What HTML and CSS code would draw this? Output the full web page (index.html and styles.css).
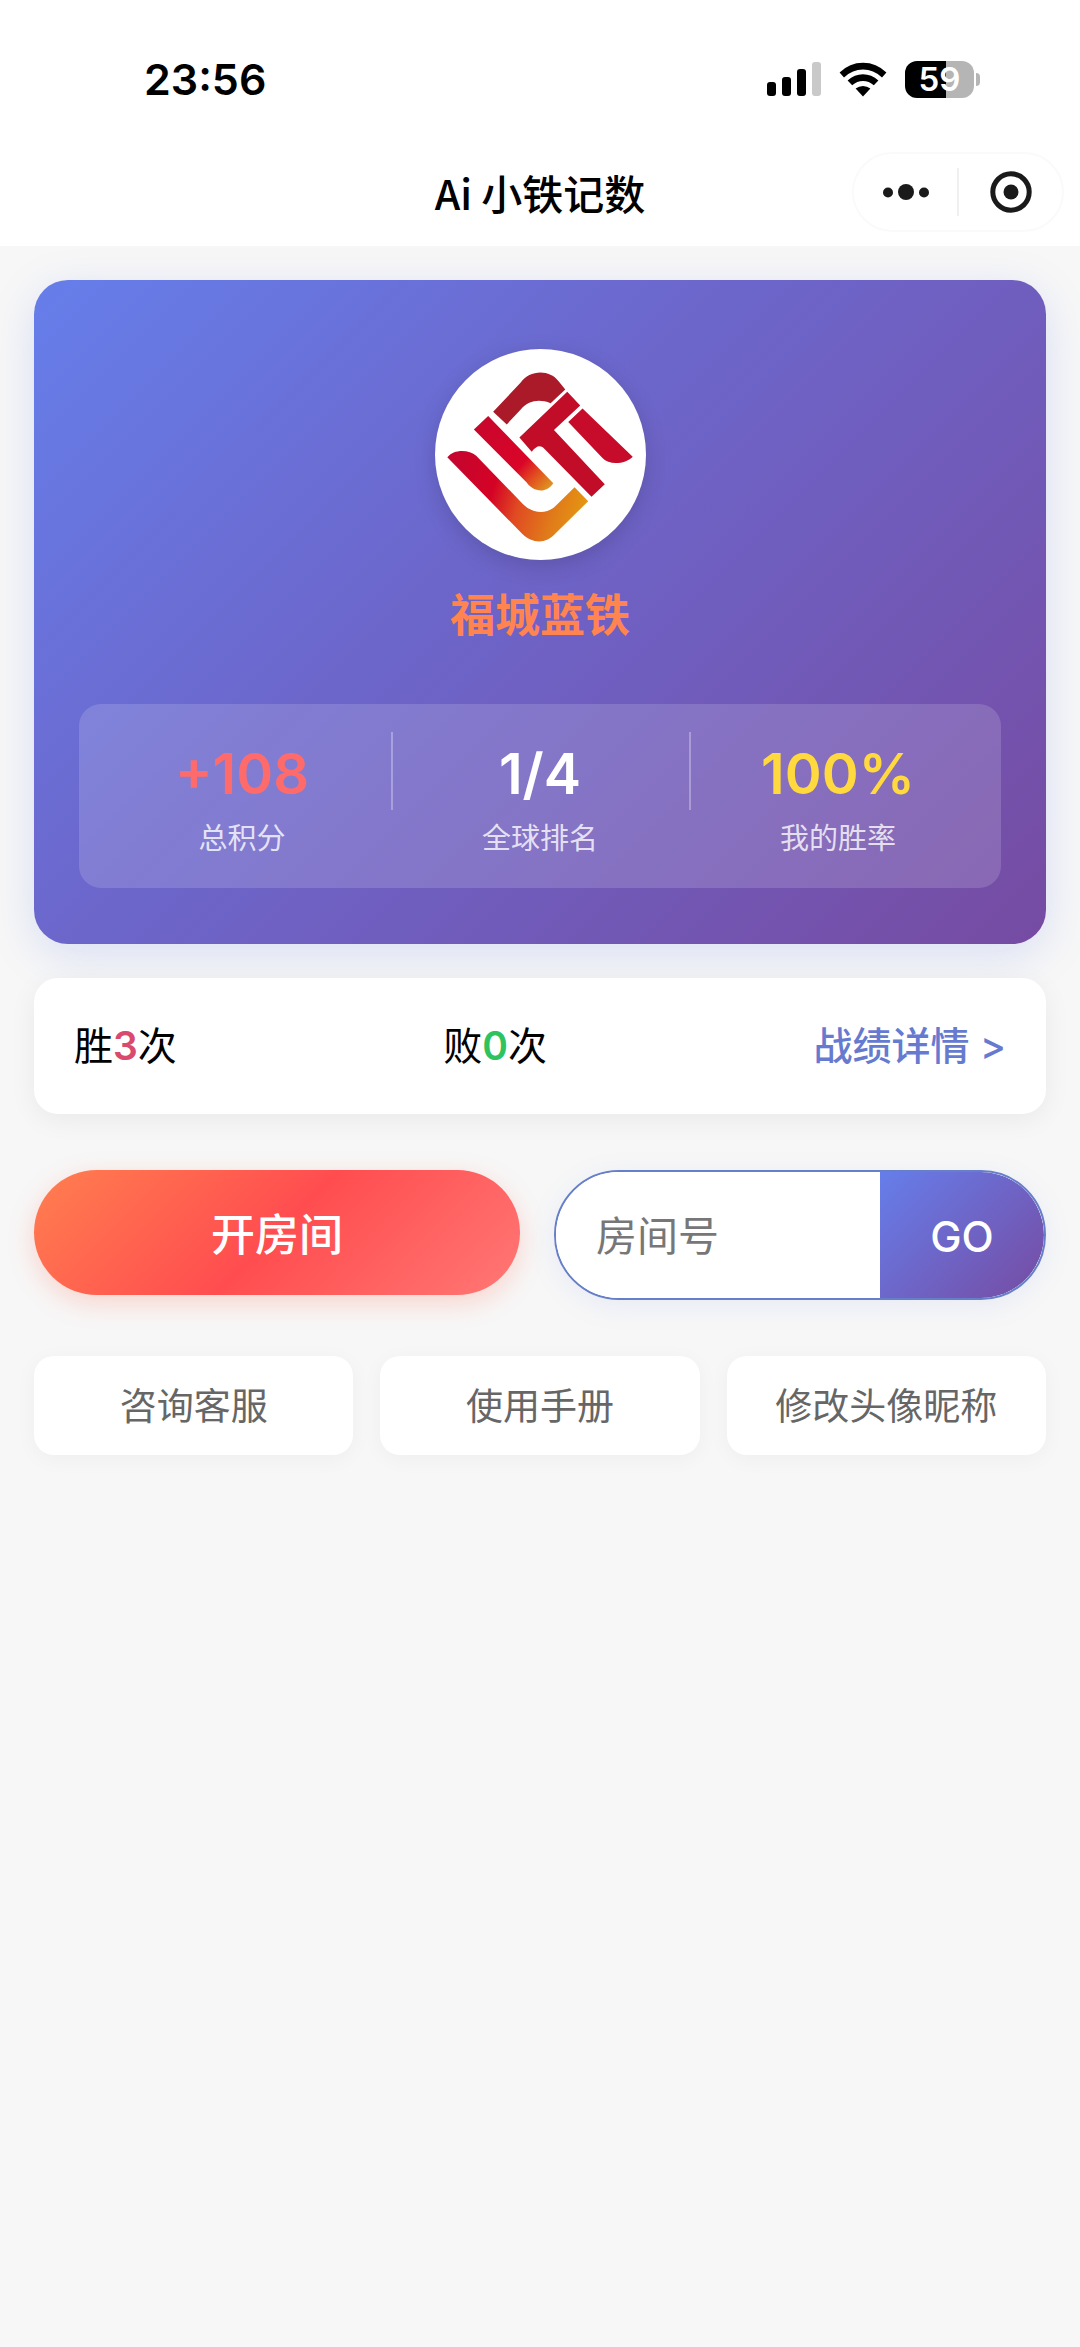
FILE: index.html
```html
<!DOCTYPE html>
<html lang="zh-CN">
<head>
<meta charset="utf-8">
<meta name="viewport" content="width=device-width, initial-scale=1">
<title>Ai 小铁记数</title>
<link rel="stylesheet" href="styles.css">
</head>
<body>
<header class="top">
  <div class="status">
    <time class="clock">23:56</time>
    <div class="status-icons">
      <svg class="signal" width="54" height="34" viewBox="0 0 54 34" aria-hidden="true">
        <rect x="0" y="20" width="9" height="14" rx="3"/>
        <rect x="15" y="15" width="9" height="19" rx="3"/>
        <rect x="30" y="7" width="9" height="27" rx="3"/>
        <rect x="45" y="0" width="9" height="34" rx="3" fill="#c9c9c9"/>
      </svg>
      <svg class="wifi" width="48" height="35" viewBox="0 0 48 35" aria-hidden="true">
        <path d="M0.6 10.6 Q10.500 0.800 24 0.800 T47.400 10.600 L43 15.400 Q34.500 7.500 24 7.500 T5 15.400 Z"/>
        <path d="M8.600 18.600 Q15.500 12.200 24 12.200 T39.400 18.600 L34.800 23.200 Q30 18.900 24 18.900 T13.200 23.200 Z"/>
        <path d="M16.600 26.600 Q20 24 24 24 T31.400 26.600 L24 34.500 Z"/>
      </svg>
      <div class="battery"><span>59</span></div>
    </div>
  </div>
  <div class="navbar">
    <h1 class="title">Ai 小铁记数</h1>
    <div class="capsule">
      <button class="capsule-btn" type="button" aria-label="更多">
        <svg width="46" height="16" viewBox="0 0 46 16" fill="#1a1a1a"><circle cx="5" cy="8.500" r="5"/><circle cx="23" cy="8" r="8"/><circle cx="41" cy="8.500" r="5"/></svg>
      </button>
      <button class="capsule-btn" type="button" aria-label="关闭">
        <svg width="42" height="42" viewBox="0 0 42 42"><circle cx="21" cy="21" r="18.200" fill="none" stroke="#1a1a1a" stroke-width="5"/><circle cx="21" cy="21" r="7.500" fill="#1a1a1a"/></svg>
      </button>
    </div>
  </div>
</header>

<main class="content">
  <section class="profile">
    <svg class="avatar" viewBox="42 26 635 635" role="img" aria-label="头像">
      <defs>
        <linearGradient id="stem" gradientUnits="userSpaceOnUse" x1="180" y1="250" x2="385" y2="440">
          <stop offset="0" stop-color="#c9062c"/><stop offset=".62" stop-color="#da0528"/><stop offset=".82" stop-color="#e2511f"/><stop offset="1" stop-color="#de9020"/>
        </linearGradient>
        <linearGradient id="bowl" gradientUnits="userSpaceOnUse" x1="90" y1="350" x2="500" y2="480">
          <stop offset="0" stop-color="#c5052f"/><stop offset=".35" stop-color="#d40325"/><stop offset=".55" stop-color="#e04a22"/><stop offset=".8" stop-color="#e07a1a"/><stop offset="1" stop-color="#e59512"/>
        </linearGradient>
      </defs>
      <path fill="#ab1a28" d="M217 215 L300 127 C325 90 385 85 414 123 L434 148 L390 189 C355 176 325 180 300 208 L258 253 Z"/>
      <path fill="url(#stem)" d="M202 228 L159 268 L318 428 C335 453 375 465 398 430 Z"/>
      <path fill="#c20d28" d="M440 155 L479 196 L400 270 L553 433 L513 471 L371 326 C358 313 347 318 333 335 L296 292 Z"/>
      <path fill="#c60c2a" d="M486 205 L637 350 C615 373 566 377 546 354 L443 246 Z"/>
      <path fill="url(#bowl)" d="M79 352 C98 326 145 328 166 347 L307 493 C338 523 382 525 410 493 L462 442 L503 484 L406 580 C374 616 335 611 305 583 Z"/>
    </svg>
    <h2 class="name">福城蓝铁</h2>
    <dl class="stats">
      <div class="stat"><dt>总积分</dt><dd class="score">+108</dd></div>
      <div class="stat"><dt>全球排名</dt><dd>1/4</dd></div>
      <div class="stat"><dt>我的胜率</dt><dd class="rate">100%</dd></div>
    </dl>
  </section>

  <section class="record">
    <span>胜<b class="win">3</b>次</span>
    <span>败<b class="loss">0</b>次</span>
    <a class="details" href="#details">战绩详情 &gt;</a>
  </section>

  <section class="actions">
    <button class="create" type="button">开房间</button>
    <form class="join">
      <input class="room" type="text" placeholder="房间号" aria-label="房间号">
      <button class="go" type="button">GO</button>
    </form>
  </section>

  <nav class="links">
    <button class="link" type="button">咨询客服</button>
    <button class="link" type="button">使用手册</button>
    <button class="link" type="button">修改头像昵称</button>
  </nav>
</main>
</body>
</html>
```
FILE: styles.css
```css
* {
  box-sizing: border-box;
}

body {
  margin: 0;
  min-height: 100vh;
  background: #f7f7f7;
  color: #000;
  font-family: Inter, "Noto Sans CJK SC", sans-serif;
}

button,
input {
  font: inherit;
  border: 0;
  padding: 0;
  margin: 0;
}

.top {
  background: #fff;
  padding-bottom: 14px;
}

.status {
  display: flex;
  justify-content: space-between;
  align-items: center;
  height: 152px;
  padding: 6px 99px 0 144px;
}

.clock {
  font-size: 43px;
  font-weight: 600;
  line-height: 52px;
}

.status-icons {
  display: flex;
  align-items: center;
  gap: 18px;
}

.battery {
  position: relative;
  width: 69px;
  height: 37px;
  margin-right: 7px;
  border-radius: 12px;
  background: linear-gradient(90deg, #000 59%, #b5b5b5 59%);
  color: #fff;
  font-size: 33px;
  font-weight: 600;
  line-height: 37px;
  text-align: center;
}

.battery::after {
  content: "";
  position: absolute;
  left: 71px;
  top: 12px;
  width: 4px;
  height: 13px;
  border-radius: 0 6px 6px 0;
  background: #b5b5b5;
}

.navbar {
  display: grid;
  grid-template-columns: 1fr auto 1fr;
  align-items: center;
  height: 80px;
  padding: 0 16px;
}

.title {
  grid-column: 2;
  margin: 0;
  font-size: 41px;
  font-weight: 500;
  line-height: 56px;
  font-family: "Noto Sans CJK SC", sans-serif;
}

.capsule {
  display: flex;
  justify-self: end;
  align-items: center;
  width: 212px;
  height: 80px;
  border: 2px solid #fafafa;
  border-radius: 40px;
}

.capsule-btn {
  display: flex;
  flex: 1;
  align-items: center;
  justify-content: center;
  height: 48px;
  background: none;
}

.capsule-btn + .capsule-btn {
  border-left: 2px solid #f0f0f0;
}

.content {
  display: flex;
  flex-direction: column;
  padding: 34px;
}

.profile {
  display: flex;
  flex-direction: column;
  align-items: center;
  padding: 69px 45px 56px;
  border-radius: 34px;
  background: linear-gradient(135deg, #667eea, #6c67cc 40%, #764ba2);
  box-shadow: 0 11px 45px rgba(102, 126, 234, .2);
}

.avatar {
  width: 211px;
  height: 211px;
  border-radius: 50%;
  background: #fff;
  box-shadow: 0 6px 22px rgba(0, 0, 0, .15);
}

.name {
  margin: 24px 0 56px;
  color: #ff8450;
  font-size: 45px;
  font-weight: 600;
  line-height: 64px;
}

.stats {
  display: flex;
  align-self: stretch;
  margin: 0;
  padding: 28px 14px;
  border-radius: 22px;
  background: rgba(255, 255, 255, .15);
}

.stat {
  position: relative;
  display: flex;
  flex: 1;
  flex-direction: column-reverse;
  align-items: center;
  gap: 8px;
}

.stat + .stat::before {
  content: "";
  position: absolute;
  left: 0;
  top: 0;
  width: 2px;
  height: 78px;
  background: rgba(255, 255, 255, .3);
}

.stat dt {
  color: rgba(255, 255, 255, .8);
  font-size: 29px;
  line-height: 42px;
}

.stat dd {
  margin: 0;
  padding-top: 6px;
  color: #fff;
  font-size: 56px;
  font-weight: 600;
  line-height: 72px;
}

.stat .score {
  color: #ff6b6b;
}

.stat .rate {
  color: #ffd93d;
}

.record {
  display: flex;
  justify-content: space-between;
  align-items: center;
  margin-top: 34px;
  padding: 40px;
  border-radius: 24px;
  background: #fff;
  box-shadow: 0 6px 28px rgba(0, 0, 0, .06);
  font-size: 39px;
  line-height: 56px;
}

.record b {
  font-weight: 600;
}

.win {
  color: #d94a6e;
}

.loss {
  color: #2fc35f;
}

.details {
  color: #667bd0;
  font-weight: 500;
  text-decoration: none;
}

.actions {
  display: grid;
  grid-template-columns: 486fr 492fr;
  align-items: start;
  gap: 34px;
  margin-top: 56px;
}

.create {
  height: 125px;
  padding-bottom: 2px;
  border-radius: 63px;
  background: linear-gradient(135deg, #ff7f50 0%, #ff4d4f 50%, #ff7875 100%);
  box-shadow: 0 8px 26px rgba(255, 107, 80, .25);
  color: #fff;
  font-size: 44px;
  font-weight: 500;
}

.join {
  display: flex;
  height: 130px;
  overflow: hidden;
  border: 2px solid #667fc8;
  border-radius: 65px;
  background: #fff;
  box-shadow: 0 6px 28px rgba(102, 126, 234, .1);
}

.room {
  flex: 1;
  min-width: 0;
  padding: 2px 0 0 40px;
  background: #fff;
  color: #333;
  font-size: 41px;
}

.room::placeholder {
  color: #777;
  opacity: 1;
}

.go {
  width: 164px;
  padding-top: 2px;
  border-radius: 0 63px 63px 0;
  background: linear-gradient(135deg, #667eea, #764ba2);
  color: #fff;
  font-size: 42px;
  font-weight: 500;
}

.links {
  display: grid;
  grid-template-columns: repeat(3, 1fr);
  gap: 27px;
  margin-top: 56px;
}

.link {
  height: 99px;
  padding-bottom: 4px;
  border-radius: 20px;
  background: #fff;
  box-shadow: 0 4px 22px rgba(0, 0, 0, .04);
  color: #666;
  font-size: 37px;
}
```
